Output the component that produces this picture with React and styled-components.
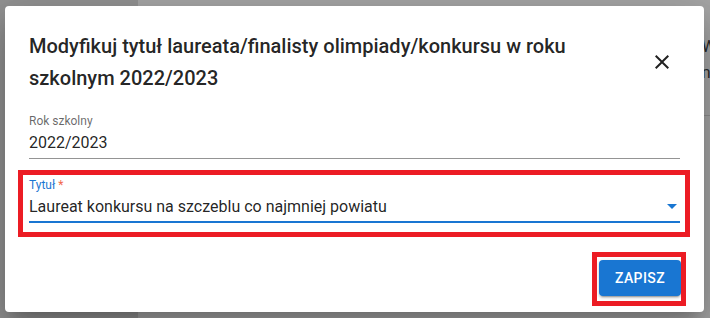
import React from "react";
import styled, { createGlobalStyle } from "styled-components";

const GlobalStyle = createGlobalStyle`
  * { box-sizing: border-box; }
  html, body { margin: 0; padding: 0; }
  body {
    font-family: Roboto, "Noto Sans", "Liberation Sans", sans-serif;
    background: #a6a6a6;
  }
`;

const Page = styled.div`
  position: relative;
  width: 710px;
  height: 318px;
  overflow: hidden;
  display: grid;
  grid-template-columns: 138px 1fr;
`;

const Sidebar = styled.div`
  background: #929292;
`;

const Main = styled.div`
  background: #a6a6a6;
  display: flex;
  justify-content: flex-end;
`;

const Peek = styled.div`
  display: flex;
  flex-direction: column;
  gap: 8px;
  padding: 38px 0 0;
  margin-right: -6px;
  font-size: 16px;
  color: #2a2a2a;
  line-height: 18px;
  border-bottom: 1px solid #8e8e8e;
  height: 116px;
`;

const Backdrop = styled.div`
  position: absolute;
  inset: 0;
  display: flex;
  padding: 6px 6px 6px 5px;
`;

const Dialog = styled.div`
  flex: 1;
  background: #fff;
  border-radius: 4px;
  display: flex;
  flex-direction: column;
  box-shadow: 0px 11px 15px -7px rgba(0, 0, 0, 0.2),
    0px 24px 38px 3px rgba(0, 0, 0, 0.14), 0px 9px 46px 8px rgba(0, 0, 0, 0.12);
`;

const TitleRow = styled.div`
  display: flex;
  align-items: center;
  gap: 8px;
  padding: 24px 30px 0 24px;
`;

const Title = styled.h2`
  flex: 1;
  margin: 0;
  font-size: 20px;
  font-weight: 500;
  line-height: 32px;
  color: rgba(0, 0, 0, 0.87);
`;

const CloseButton = styled.button`
  display: flex;
  padding: 0;
  border: 0;
  background: none;
  color: rgba(0, 0, 0, 0.87);
  cursor: pointer;
`;

const Content = styled.div`
  display: flex;
  flex-direction: column;
  gap: 18px;
  padding: 19px 24px 0;
`;

const Field = styled.div`
  position: relative;
  display: flex;
  flex-direction: column;

  ${(p) =>
    p.$marked &&
    `
    &::after {
      content: "";
      position: absolute;
      inset: -7px -10px -14px -11px;
      border: 5px solid #ec1c24;
      pointer-events: none;
    }
  `}
`;

const Label = styled.label`
  font-size: 12px;
  line-height: 16px;
  margin-bottom: 2px;
  color: ${(p) => (p.$focused ? "#1976d2" : "rgba(0, 0, 0, 0.6)")};
`;

const Asterisk = styled.span`
  color: #f2684c;
`;

const ValueRow = styled.div`
  display: flex;
  align-items: center;
  font-size: 16px;
  line-height: 23px;
  color: rgba(0, 0, 0, 0.87);
  padding-bottom: ${(p) => (p.$focused ? "3px" : "4px")};
  border-bottom: ${(p) =>
    p.$focused ? "2px solid #1976d2" : "1px solid rgba(0, 0, 0, 0.42)"};
`;

const Value = styled.span`
  flex: 1;
`;

const Arrow = styled.svg`
  width: 10px;
  height: 5px;
  margin-right: 3px;
  fill: ${(p) => (p.$focused ? "#1976d2" : "rgba(0, 0, 0, 0.54)")};
`;

const Actions = styled.div`
  display: flex;
  justify-content: flex-end;
  padding: 37px 23px 16px;
`;

const Marked = styled.div`
  position: relative;

  &::after {
    content: "";
    position: absolute;
    inset: -8px -5px -10px -7px;
    border: 5px solid #ec1c24;
    pointer-events: none;
  }
`;

const Button = styled.button`
  height: 36px;
  padding: 0 16px;
  border: 0;
  border-radius: 4px;
  background: #1976d2;
  color: #fff;
  font-family: inherit;
  font-size: 14px;
  font-weight: 500;
  letter-spacing: 0.4px;
  text-transform: uppercase;
  cursor: pointer;
  box-shadow: 0px 3px 1px -2px rgba(0, 0, 0, 0.2),
    0px 2px 2px 0px rgba(0, 0, 0, 0.14), 0px 1px 5px 0px rgba(0, 0, 0, 0.12);
`;

const CloseIcon = () => (
  <svg width="24" height="24" viewBox="0 0 24 24" fill="currentColor">
    <path d="M19 6.41 17.59 5 12 10.59 6.41 5 5 6.41 10.59 12 5 17.59 6.41 19 12 13.41 17.59 19 19 17.59 13.41 12z" />
  </svg>
);

export default function App() {
  return (
    <>
      <GlobalStyle />
      <Page>
        <Sidebar />
        <Main>
          <Peek>
            <span>W</span>
            <span>n</span>
          </Peek>
        </Main>

        <Backdrop>
          <Dialog role="dialog">
            <TitleRow>
              <Title>
                Modyfikuj tytuł laureata/finalisty olimpiady/konkursu w roku
                szkolnym 2022/2023
              </Title>
              <CloseButton aria-label="close">
                <CloseIcon />
              </CloseButton>
            </TitleRow>

            <Content>
              <Field>
                <Label>Rok szkolny</Label>
                <ValueRow>
                  <Value>2022/2023</Value>
                </ValueRow>
              </Field>

              <Field $marked>
                <Label $focused>
                  Tytuł <Asterisk>*</Asterisk>
                </Label>
                <ValueRow $focused>
                  <Value>Laureat konkursu na szczeblu co najmniej powiatu</Value>
                  <Arrow $focused viewBox="0 0 10 5">
                    <path d="M0 0l5 5 5-5z" />
                  </Arrow>
                </ValueRow>
              </Field>
            </Content>

            <Actions>
              <Marked>
                <Button>Zapisz</Button>
              </Marked>
            </Actions>
          </Dialog>
        </Backdrop>
      </Page>
    </>
  );
}
